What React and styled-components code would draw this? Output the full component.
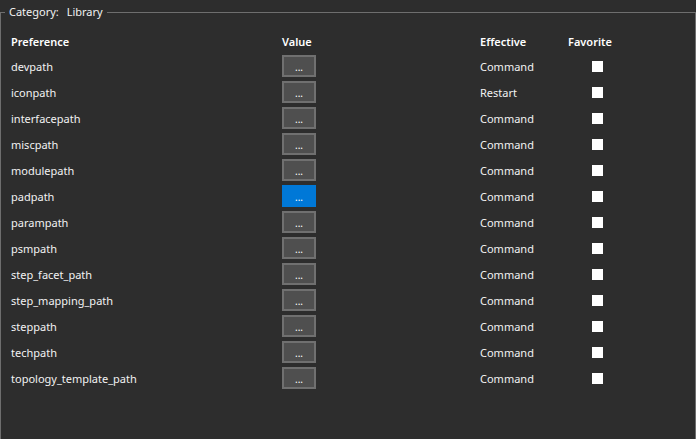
import React from 'react';
import styled, { createGlobalStyle } from 'styled-components';

const GlobalStyle = createGlobalStyle`
  html, body {
    margin: 0;
    padding: 0;
    background: #2d2d2d;
    overflow: hidden;
  }
  body {
    font-family: "Noto Sans", "Open Sans", sans-serif;
    font-size: 11px;
    color: #f2f2f2;
  }
`;

const Group = styled.fieldset`
  margin: 4px 0 0 0;
  padding: 9px 0 0 0;
  min-inline-size: 0;
  width: 696px;
  height: 470px;
  box-sizing: border-box;
  border: 1px solid #6e6e6e;
`;

const Legend = styled.legend`
  margin-left: 4px;
  padding: 0 4px;
  line-height: 16px;
  color: #f2f2f2;
  word-spacing: 5px;
`;

const Table = styled.div`
  display: grid;
  grid-template-columns: 271px 198px 88px 1fr;
  padding-left: 10px;
`;

const HeadCell = styled.div`
  height: 24px;
  display: flex;
  align-items: center;
  font-weight: 600;
  color: #ffffff;
`;

const Cell = styled.div`
  height: 26px;
  display: flex;
  align-items: center;
`;

const ValueButton = styled.div`
  width: 34px;
  height: 22px;
  box-sizing: border-box;
  border: 2px solid ${p => (p.$active ? '#0078d7' : '#707070')};
  background: ${p => (p.$active ? '#0078d7' : '#4f4f4f')};
  color: #ffffff;
  display: flex;
  align-items: center;
  justify-content: center;
  font-size: 10px;
  line-height: 1;
  padding-top: 2px;
`;

const Check = styled.div`
  width: 11px;
  height: 11px;
  background: #ffffff;
  margin-left: 24px;
`;

const rows = [
  ['devpath', 'Command'],
  ['iconpath', 'Restart'],
  ['interfacepath', 'Command'],
  ['miscpath', 'Command'],
  ['modulepath', 'Command'],
  ['padpath', 'Command', true],
  ['parampath', 'Command'],
  ['psmpath', 'Command'],
  ['step_facet_path', 'Command'],
  ['step_mapping_path', 'Command'],
  ['steppath', 'Command'],
  ['techpath', 'Command'],
  ['topology_template_path', 'Command'],
];

export default function App() {
  return (
    <>
      <GlobalStyle />
      <Group>
        <Legend>Category: Library</Legend>
        <Table>
          <HeadCell>Preference</HeadCell>
          <HeadCell>Value</HeadCell>
          <HeadCell>Effective</HeadCell>
          <HeadCell>Favorite</HeadCell>
          {rows.map(([name, eff, active]) => (
            <React.Fragment key={name}>
              <Cell>{name}</Cell>
              <Cell>
                <ValueButton $active={active}>...</ValueButton>
              </Cell>
              <Cell>{eff}</Cell>
              <Cell>
                <Check />
              </Cell>
            </React.Fragment>
          ))}
        </Table>
      </Group>
    </>
  );
}
